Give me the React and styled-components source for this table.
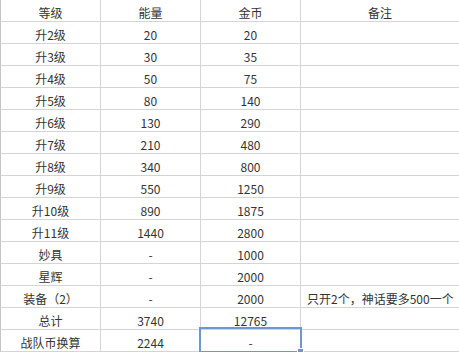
import React from 'react';
import styled, { createGlobalStyle } from 'styled-components';

const GlobalStyle = createGlobalStyle`
    html, body {
        margin: 0;
        padding: 0;
        background: #fff;
    }
    body {
        font-family: "Microsoft YaHei", "Noto Sans CJK SC", sans-serif;
    }
`;

const Sheet = styled.div`
    display: grid;
    grid-template-columns: 101px 100px 100px 158px;
    grid-auto-rows: 22px;
    width: 459px;
    color: #333;
    font-size: 12px;
`;

const Cell = styled.div`
    position: relative;
    box-sizing: border-box;
    display: flex;
    align-items: center;
    justify-content: ${p => (p.$left ? 'flex-start' : 'center')};
    padding: 3px ${p => (p.$left ? '6px' : '0')} 0;
    border-bottom: 1px solid #d4d4d4;
    border-right: ${p => (p.$last ? 'none' : '1px solid #d4d4d4')};
    border-left: ${p => (p.$first ? '1px solid #c4c4c4' : 'none')};
    white-space: nowrap;

    ${p => p.$selected && `
        &::after {
            content: '';
            position: absolute;
            left: -2px;
            top: -3px;
            right: -2px;
            bottom: -2px;
            border: 2px solid #6b98d3;
            pointer-events: none;
        }
        &::before {
            content: '';
            position: absolute;
            right: -4px;
            bottom: -4px;
            width: 5px;
            height: 5px;
            background: #6b98d3;
            border: 1px solid #fff;
            z-index: 2;
        }
    `}
`;

const rows = [
    ['升2级', '20', '20', ''],
    ['升3级', '30', '35', ''],
    ['升4级', '50', '75', ''],
    ['升5级', '80', '140', ''],
    ['升6级', '130', '290', ''],
    ['升7级', '210', '480', ''],
    ['升8级', '340', '800', ''],
    ['升9级', '550', '1250', ''],
    ['升10级', '890', '1875', ''],
    ['升11级', '1440', '2800', ''],
    ['妙具', '-', '1000', ''],
    ['星辉', '-', '2000', ''],
    ['装备（2）', '-', '2000', '只开2个，神话要多500一个'],
    ['总计', '3740', '12765', ''],
    ['战队币换算', '2244', '-', ''],
];

const header = ['等级', '能量', '金币', '备注'];

export default function App() {
    return (
        <>
            <GlobalStyle />
            <Sheet>
                {header.map((h, i) => (
                    <Cell key={h} $first={i === 0} $last={i === 3}>{h}</Cell>
                ))}
                {rows.map((r, ri) =>
                    r.map((v, ci) => (
                        <Cell
                            key={ri + '-' + ci}
                            $first={ci === 0}
                            $last={ci === 3}
                            $left={ci === 3}
                            $selected={ri === rows.length - 1 && ci === 2}
                        >
                            {v}
                        </Cell>
                    ))
                )}
            </Sheet>
        </>
    );
}
